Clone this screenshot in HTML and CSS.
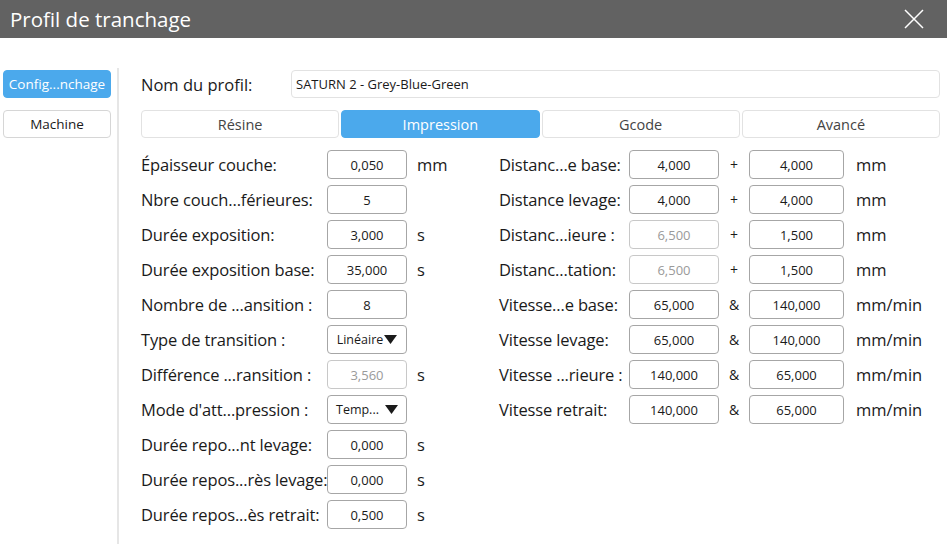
FILE: index.html
```
<!DOCTYPE html>
<html lang="fr">

<head>
    <meta charset="UTF-8">
    <meta name="viewport" content="width=device-width, initial-scale=1.0">
    <title>Profil de tranchage</title>
    <link rel="stylesheet" href="styles.css">
</head>

<body>
<header class="titlebar">
    <h1>Profil de tranchage</h1>
    <button class="close" aria-label="Fermer">
        <svg width="20" height="20" viewBox="0 0 20 20">
            <path d="M1 1 L19 19 M19 1 L1 19" stroke="#fff" stroke-width="1.5" fill="none"/>
        </svg>
    </button>
</header>

<div class="window">
    <nav class="sidebar">
        <button class="side-btn active">Config...nchage</button>
        <button class="side-btn">Machine</button>
    </nav>

    <main class="content">
        <div class="name-row">
            <label for="profileName">Nom du profil:</label>
            <input id="profileName" class="name-input" type="text" value="SATURN 2 - Grey-Blue-Green">
        </div>

        <div class="tabs">
            <button class="tab">Résine</button>
            <button class="tab active">Impression</button>
            <button class="tab">Gcode</button>
            <button class="tab">Avancé</button>
        </div>

        <div class="form">
            <!-- left column -->
            <div class="col col-left">
                <div class="row">
                    <span class="label">Épaisseur couche:</span>
                    <input class="field" value="0,050">
                    <span class="unit">mm</span>
                </div>
                <div class="row">
                    <span class="label">Nbre couch...férieures:</span>
                    <input class="field" value="5">
                </div>
                <div class="row">
                    <span class="label">Durée exposition:</span>
                    <input class="field" value="3,000">
                    <span class="unit">s</span>
                </div>
                <div class="row">
                    <span class="label">Durée exposition base:</span>
                    <input class="field" value="35,000">
                    <span class="unit">s</span>
                </div>
                <div class="row">
                    <span class="label">Nombre de ...ansition :</span>
                    <input class="field" value="8">
                </div>
                <div class="row">
                    <span class="label">Type de transition :</span>
                    <div class="field select">Linéaire<svg class="arrow" width="13" height="9" viewBox="0 0 13 9"><path d="M0 0 H13 L6.5 9 Z" fill="#1a1a1a"/></svg></div>
                </div>
                <div class="row">
                    <span class="label">Différence ...ransition :</span>
                    <input class="field" value="3,560" disabled>
                    <span class="unit">s</span>
                </div>
                <div class="row">
                    <span class="label">Mode d'att...pression :</span>
                    <div class="field select">Temp...<svg class="arrow gap" width="13" height="9" viewBox="0 0 13 9"><path d="M0 0 H13 L6.5 9 Z" fill="#1a1a1a"/></svg></div>
                </div>
                <div class="row">
                    <span class="label">Durée repo...nt levage:</span>
                    <input class="field" value="0,000">
                    <span class="unit">s</span>
                </div>
                <div class="row">
                    <span class="label">Durée repos...rès levage:</span>
                    <input class="field" value="0,000">
                    <span class="unit">s</span>
                </div>
                <div class="row">
                    <span class="label">Durée repos...ès retrait:</span>
                    <input class="field" value="0,500">
                    <span class="unit">s</span>
                </div>
            </div>

            <!-- right column -->
            <div class="col col-right">
                <div class="row">
                    <span class="label">Distanc...e base:</span>
                    <input class="field wide" value="4,000">
                    <span class="op">+</span>
                    <input class="field wider" value="4,000">
                    <span class="unit">mm</span>
                </div>
                <div class="row">
                    <span class="label">Distance levage:</span>
                    <input class="field wide" value="4,000">
                    <span class="op">+</span>
                    <input class="field wider" value="4,000">
                    <span class="unit">mm</span>
                </div>
                <div class="row">
                    <span class="label">Distanc...ieure :</span>
                    <input class="field wide" value="6,500" disabled>
                    <span class="op">+</span>
                    <input class="field wider" value="1,500">
                    <span class="unit">mm</span>
                </div>
                <div class="row">
                    <span class="label">Distanc...tation:</span>
                    <input class="field wide" value="6,500" disabled>
                    <span class="op">+</span>
                    <input class="field wider" value="1,500">
                    <span class="unit">mm</span>
                </div>
                <div class="row">
                    <span class="label">Vitesse...e base:</span>
                    <input class="field wide" value="65,000">
                    <span class="op">&amp;</span>
                    <input class="field wider" value="140,000">
                    <span class="unit">mm/min</span>
                </div>
                <div class="row">
                    <span class="label">Vitesse levage:</span>
                    <input class="field wide" value="65,000">
                    <span class="op">&amp;</span>
                    <input class="field wider" value="140,000">
                    <span class="unit">mm/min</span>
                </div>
                <div class="row">
                    <span class="label">Vitesse ...rieure :</span>
                    <input class="field wide" value="140,000">
                    <span class="op">&amp;</span>
                    <input class="field wider" value="65,000">
                    <span class="unit">mm/min</span>
                </div>
                <div class="row">
                    <span class="label">Vitesse retrait:</span>
                    <input class="field wide" value="140,000">
                    <span class="op">&amp;</span>
                    <input class="field wider" value="65,000">
                    <span class="unit">mm/min</span>
                </div>
            </div>
        </div>
    </main>
</div>
</body>

</html>
```

FILE: styles.css
```
body {
    font-family: 'Open Sans', sans-serif;
    margin: 0;
    padding: 0;
    background-color: #fff;
    color: #1a1a1a;
    width: 947px;
    height: 544px;
    overflow: hidden;
}

.titlebar {
    background-color: #626262;
    height: 38px;
    display: flex;
    align-items: center;
    justify-content: space-between;
    padding: 0 23px 0 10px;
}

.titlebar h1 {
    margin: 0;
    color: #fff;
    font-size: 20.5px;
    font-weight: normal;
}

.close {
    background: none;
    border: none;
    padding: 0;
    display: flex;
    cursor: pointer;
}

.window {
    display: flex;
    margin-top: 30px;
    height: 476px;
}

.sidebar {
    width: 114px;
    padding: 2px 0 0 3px;
    border-right: 2px solid #e6e6e6;
    display: flex;
    flex-direction: column;
    gap: 12px;
}

.side-btn {
    width: 108px;
    height: 28px;
    border: 1px solid #d6d6d6;
    border-radius: 4px;
    background-color: #fff;
    font-family: inherit;
    font-size: 13.5px;
    color: #1a1a1a;
    padding: 0;
}

.side-btn.active {
    background-color: #4ba9ec;
    border-color: #4ba9ec;
    color: #fff;
}

.content {
    flex: 1;
    padding: 2px 7px 0 22px;
}

.name-row {
    display: flex;
    align-items: center;
    height: 28px;
}

.name-row label {
    width: 150px;
    font-size: 16.5px;
}

.name-input {
    flex: 1;
    height: 28px;
    box-sizing: border-box;
    border: 1px solid #e2e2e2;
    border-radius: 4px;
    font-family: inherit;
    font-size: 13px;
    padding: 0 4px;
    color: #1a1a1a;
}

.tabs {
    display: flex;
    gap: 2px;
    margin-top: 12px;
}

.tab {
    flex: 1;
    height: 28px;
    border: 1px solid #e2e2e2;
    border-radius: 4px;
    background-color: #fff;
    font-family: inherit;
    font-size: 14.5px;
    color: #444;
    padding: 0;
}

.tab.active {
    background-color: #4ba9ec;
    border-color: #4ba9ec;
    color: #fff;
}

.form {
    display: flex;
    margin-top: 12px;
}

.col {
    display: flex;
    flex-direction: column;
    gap: 6px;
}

.col-left {
    width: 358px;
}

.row {
    display: flex;
    align-items: center;
    height: 29px;
}

.label {
    font-size: 16.5px;
    letter-spacing: -0.15px;
    white-space: nowrap;
    flex-shrink: 0;
}

.col-left .label {
    width: 186px;
}

.col-right .label {
    width: 130px;
}

.field {
    width: 80px;
    height: 29px;
    box-sizing: border-box;
    border: 1px solid #a6a6a6;
    border-radius: 4px;
    font-family: inherit;
    font-size: 13px;
    text-align: center;
    color: #1a1a1a;
    background-color: #fff;
    padding: 0;
}

.field:disabled {
    color: #9a9a9a;
    border-color: #c8c8c8;
}

.field.wide {
    width: 90px;
}

.field.wider {
    width: 95px;
}

.select {
    display: flex;
    align-items: center;
    justify-content: center;
    font-size: 12.5px;
}

.arrow {
    margin-left: 1px;
}

.arrow.gap {
    margin-left: 6px;
}

.op {
    width: 30px;
    text-align: center;
    font-size: 14px;
}

.unit {
    margin-left: 10px;
    font-size: 16.5px;
}

.col-right .unit {
    margin-left: 12px;
}
```
